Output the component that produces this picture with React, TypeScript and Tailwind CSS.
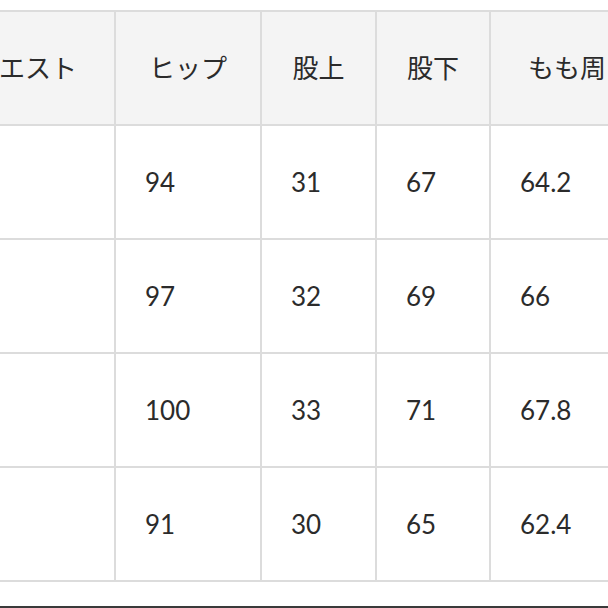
const headers = ["ウエスト", "ヒップ", "股上", "股下", "もも周り"];

const rows = [
  ["", "94", "31", "67", "64.2"],
  ["", "97", "32", "69", "66"],
  ["", "100", "33", "71", "67.8"],
  ["", "91", "30", "65", "62.4"],
];

export default function App() {
  return (
    <div
      className="w-[608px] h-[608px] overflow-hidden bg-white text-[#2b2b2b]"
      style={{ fontFamily: '"Lato", "Noto Sans CJK JP", sans-serif' }}
    >
      <div className="pt-[10px] ml-[-66px]">
        <div className="inline-grid grid-cols-[178px_144px_113px_112px_178px] auto-rows-[112px] gap-[2px] p-[2px] bg-[#dcdcdc]">
          {headers.map((h) => (
            <div
              key={h}
              className="bg-[#f4f4f4] flex items-center justify-center text-[26px] whitespace-nowrap"
            >
              {h}
            </div>
          ))}
          {rows.map((row, i) =>
            row.map((cell, j) => (
              <div
                key={`${i}-${j}`}
                className="bg-white flex items-center pl-[29px] text-[26px]"
              >
                {cell}
              </div>
            ))
          )}
        </div>
      </div>
      <div className="mt-[24px] h-[2px] bg-[#3a3a3a]" />
    </div>
  );
}
